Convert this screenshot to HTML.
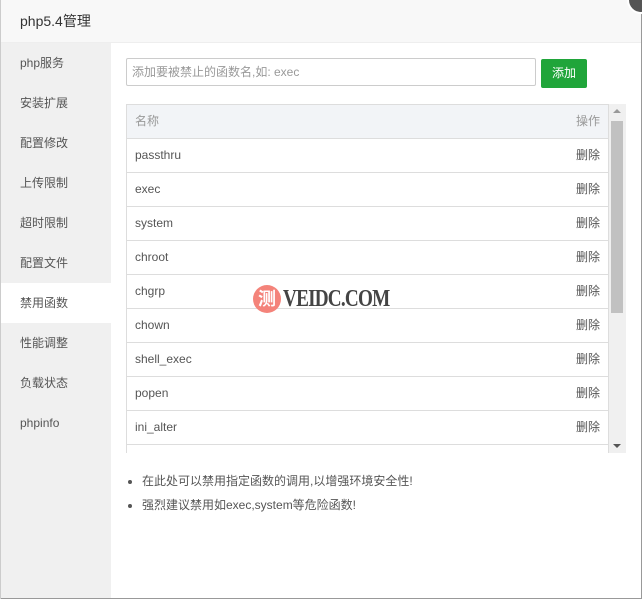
<!DOCTYPE html>
<html><head><meta charset="utf-8"><style>
*{margin:0;padding:0;box-sizing:border-box}
body{width:642px;height:599px;overflow:hidden;background:#fff;font-family:"Liberation Sans","Noto Sans CJK SC",sans-serif;font-size:12px;color:#555;position:relative}
.win{position:absolute;left:0;top:0;width:642px;height:599px;border-right:1px solid #999;border-bottom:1px solid #999}
.lb{position:absolute;left:0;top:0;width:1px;height:599px;background:#ccc;z-index:5}
.title{height:43px;background:#f8f8f8;border-bottom:1px solid #eee;font-size:14px;color:#333;line-height:43px;padding-left:20px}
.side{position:absolute;left:0;top:43px;width:111px;bottom:0;background:#f0f0f0}
.side div{height:40px;line-height:40px;padding-left:20px;color:#555;font-size:12px}
.side div.on{background:#fff}
.inp{position:absolute;left:126px;top:58px;width:410px;height:28px;border:1px solid #ccc;border-radius:2px;line-height:26px;padding-left:5px;color:#999;font-size:12px}
.btn{position:absolute;left:541px;top:59px;width:46px;height:29px;background:#20a53a;border-radius:2px;color:#fff;text-align:center;line-height:29px;font-size:12px}
.tb{position:absolute;left:126px;top:104px;width:483px;height:349px;overflow:hidden;border-left:1px solid #ddd;border-top:1px solid #ddd}
.row{height:34px;border-bottom:1px solid #ddd;border-right:1px solid #ddd;line-height:33px;padding:0 8px;display:flex;justify-content:space-between;color:#555}
.row.h{background:#f2f4f7;color:#999}
.sb{position:absolute;left:609px;top:104px;width:17px;height:349px;background:#f0f0f0}
.th{position:absolute;left:2px;top:17px;width:12px;height:192px;background:#c1c1c1}
.ua{position:absolute;left:4px;top:5px;border:4px solid transparent;border-bottom:4px solid #999;border-top:0}
.da{position:absolute;left:4px;bottom:5px;border:4px solid transparent;border-top:4px solid #555;border-bottom:0}
ul{position:absolute;left:142px;top:472px;list-style:disc;color:#555}
li{height:24px;line-height:18px;font-size:12px}
.wm{position:absolute;left:253px;top:285px;display:flex;align-items:center}
.wm .c{width:28px;height:28px;border-radius:50%;background:#f4837a;color:#fff;font-size:18px;text-align:center;line-height:28px;font-weight:bold}
.wm .t{font-family:"Liberation Serif",serif;font-weight:bold;font-size:24px;color:#444;margin-left:2px;letter-spacing:-1px;display:inline-block;transform:scaleX(0.8);transform-origin:left center}
.cl{position:absolute;left:627px;top:-14px;width:28px;height:28px;border-radius:50%;background:#555;border:2px solid #fff}
</style></head><body>
<div class="win">
<div class="title">php5.4管理</div>
<div class="side">
<div>php服务</div><div>安装扩展</div><div>配置修改</div><div>上传限制</div><div>超时限制</div><div>配置文件</div><div class="on">禁用函数</div><div>性能调整</div><div>负载状态</div><div>phpinfo</div>
</div>
<div class="inp">添加要被禁止的函数名,如: exec</div>
<div class="btn">添加</div>
<div class="tb">
<div class="row h"><span>名称</span><span>操作</span></div>
<div class="row"><span>passthru</span><span>删除</span></div>
<div class="row"><span>exec</span><span>删除</span></div>
<div class="row"><span>system</span><span>删除</span></div>
<div class="row"><span>chroot</span><span>删除</span></div>
<div class="row"><span>chgrp</span><span>删除</span></div>
<div class="row"><span>chown</span><span>删除</span></div>
<div class="row"><span>shell_exec</span><span>删除</span></div>
<div class="row"><span>popen</span><span>删除</span></div>
<div class="row"><span>ini_alter</span><span>删除</span></div>
<div class="row"><span>ini_restore</span><span>删除</span></div>
</div>
<div class="sb"><div class="ua"></div><div class="th"></div><div class="da"></div></div>
<ul><li>在此处可以禁用指定函数的调用,以增强环境安全性!</li><li>强烈建议禁用如exec,system等危险函数!</li></ul>
<div class="wm"><div class="c">测</div><div class="t">VEIDC.COM</div></div>
</div>
<div class="lb"></div>
<div class="cl"></div>
</body></html>
